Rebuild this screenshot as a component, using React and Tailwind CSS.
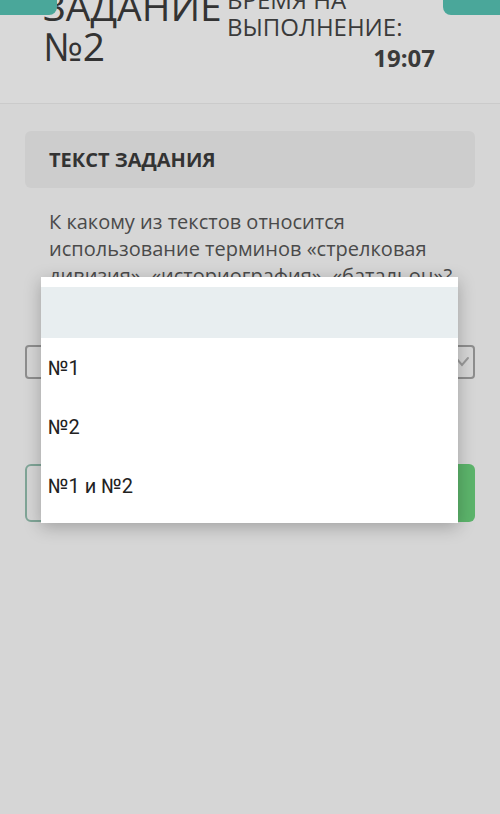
import React from "react";

function Chevron() {
  return (
    <svg width="16" height="16" viewBox="0 0 16 16" className="text-[#9a9a9a]">
      <path d="M2 4 L8 11 L14 4" fill="none" stroke="currentColor" strokeWidth="2" strokeLinecap="round" />
    </svg>
  );
}

export default function App() {
  const options = ["№1", "№2", "№1 и №2"];
  return (
    <div className="relative w-[500px] h-[814px] overflow-hidden bg-[#d6d6d6] font-['Open_Sans',sans-serif] text-[#3a3a3a]">
      {/* top nav tabs */}
      <div className="absolute left-0 top-0 z-10 h-[15px] w-[57px] rounded-br-[8px] bg-[#4aa79a]" />
      <div className="absolute right-0 top-0 z-10 h-[15px] w-[57px] rounded-bl-[8px] bg-[#4aa79a]" />

      {/* header */}
      <header className="flex h-[104px] flex-col border-b border-[#cbcbcb] bg-[#d9d9d9]">
        <div className="flex pl-[43px] mt-[-14px]">
          <div className="w-[184px] text-[39px] leading-[40px] text-[#333]">
            <div>ЗАДАНИЕ</div>
            <div>№2</div>
          </div>
          <div className="w-[208px] text-[24px] leading-[27px] text-[#3a3a3a]">
            <div>ВРЕМЯ НА</div>
            <div>ВЫПОЛНЕНИЕ:</div>
            <div className="mt-[4px] text-right text-[24px] font-bold">19:07</div>
          </div>
        </div>
      </header>

      <main className="px-[25px]">
        <div className="mt-[27px] flex h-[57px] items-center rounded-[6px] bg-[#cdcdcd] pl-[24px]">
          <span className="text-[20px] font-bold text-[#333]">ТЕКСТ ЗАДАНИЯ</span>
        </div>

        <div className="h-[157px] pt-[20px] pl-[24px] pr-[20px]">
          <p className="text-[20px] leading-[27px] text-[#4a4a4a]">
            К какому из текстов относится использование терминов «стрелковая дивизия», «историография», «батальон»?
          </p>
        </div>

        <div className="flex h-[34px] items-center justify-end rounded-[4px] border-2 border-[#8e8e8e] pr-[3px]">
          <Chevron />
        </div>

        <div className="mt-[85px] flex h-[58px] gap-[16px]">
          <div className="flex-1 rounded-[6px] border-2 border-[#7fa597]" />
          <div className="flex-1 rounded-[6px] bg-[#5cb46b]" />
        </div>
      </main>

      {/* open select menu */}
      <div className="absolute left-[41px] top-[277px] w-[417px] bg-white pt-[10px] pb-[8px] shadow-[0_4px_16px_rgba(0,0,0,0.25)] font-['Roboto',sans-serif]">
        <div className="h-[51px] bg-[#e8eef0]" />
        {options.map((o) => (
          <div key={o} className="flex h-[59px] items-center pl-[7px] text-[20px] text-[#222]">
            {o}
          </div>
        ))}
      </div>
    </div>
  );
}
